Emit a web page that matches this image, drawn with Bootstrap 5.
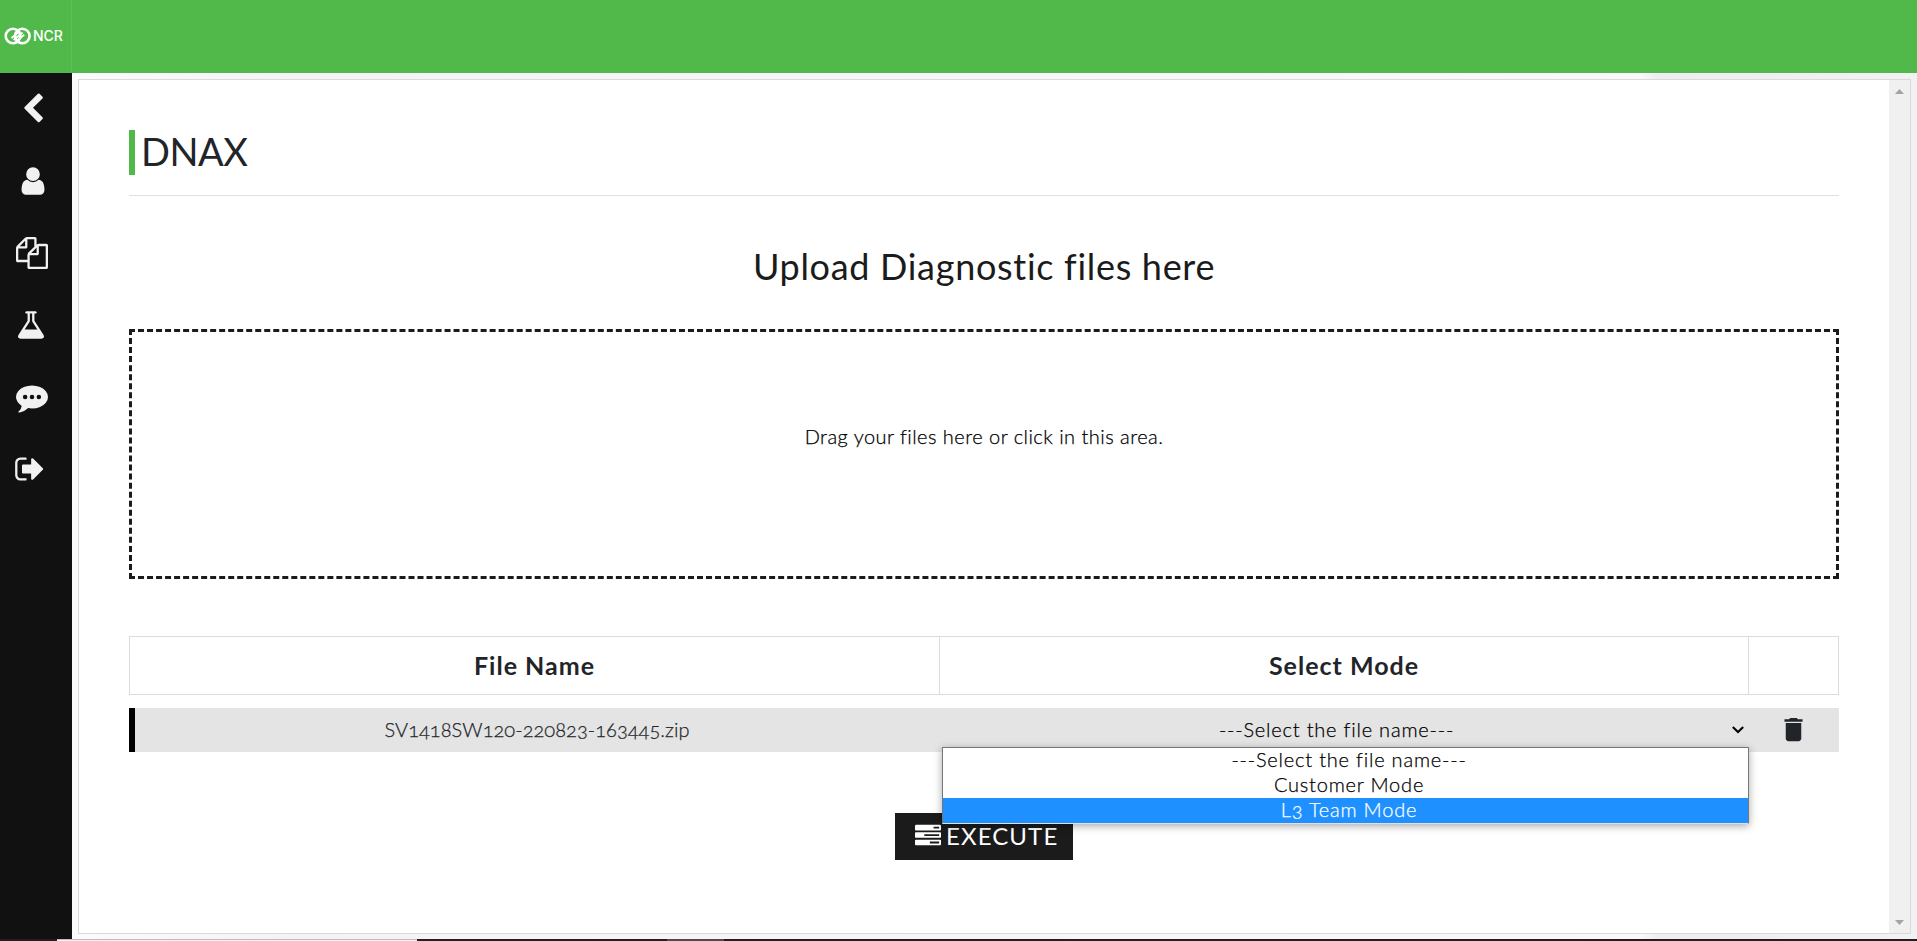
<!DOCTYPE html>
<html lang="en">
<head>
<meta charset="utf-8">
<title>DNAX</title>
<link href="https://cdn.jsdelivr.net/npm/bootstrap@5.3.0/dist/css/bootstrap.min.css" rel="stylesheet">
<style>
body{font-family:Lato,"Open Sans",sans-serif;font-size:20px;color:#212529;background:#f7f7f7;overflow:hidden;font-variant-numeric:oldstyle-nums}
.topbar{height:73px;background:#50b94a}
.brand{width:72px;border-right:1px solid #5cbf57;padding-left:4px;padding-bottom:2px;color:#fff}
.brand span{font:500 14px/1 Inter,sans-serif;margin-left:1px}
.side{width:72px;background:#111}
.side a{height:72px;color:#f1f1f1;padding-left:15.5px;padding-bottom:1px}
.side svg,.btn-run svg{fill:currentColor;display:block}
.stage{padding:6px 6px 5px;background:linear-gradient(90deg,#fbfbfb 0,#f4f4f4 12%,#f9f9f9 85%,#eee 86%,#f2f2f2 100%)}
.panel{background:#fff;border:1px solid #dadada}
.inner{padding:50px 50px 0}
.title{border-left:6px solid #50b94a;height:45px;padding-left:6px;font-size:38px;line-height:43px;font-weight:400;letter-spacing:-.5px}
.rule{height:1px;background:#e0e0e0;margin-top:20px}
.upload{font-size:36px;line-height:44px;letter-spacing:.7px;color:#1b1b1b;margin-top:48px}
.drop{height:250px;border:3px dashed #1b1b1b;margin-top:41px;color:#000;padding-top:89px;line-height:30px;letter-spacing:.47px}
.drop,.entry{font-weight:300;-webkit-text-stroke:.25px}
.cols{display:grid;grid-template-columns:809px 809px 1fr}
.heads{margin-top:57px;height:59px;border:1px solid #dcdcdc;font-size:25px;font-weight:700;letter-spacing:1px;padding-bottom:0}
.heads div+div{border-left:1px solid #dcdcdc}
.entry{margin-top:13px;height:44px;background:#e4e4e4;border-left:6px solid #000;grid-template-columns:804px 809px 1fr;letter-spacing:.05px}
.entry>div{padding-bottom:2px}
.picker{color:#000;letter-spacing:.8px}
.picker>span{margin-right:14px}
.picker .arrow{right:4px;top:18px}
.menu-list{left:3px;top:39px;width:807px;height:77px;padding-left:7px;background:linear-gradient(#fff 50px,#1e90ff 50px);border:1px solid #767676;border-bottom-color:#e0e0e0;box-shadow:0 2px 8px rgba(0,0,0,.35);z-index:5}
.menu-list div{line-height:23px;height:25px}
.menu-list .on{color:#fff}
.btn-run{width:178px;height:47px;background:#1b1b1b;color:#fff;font-size:24px;letter-spacing:1.1px;margin-top:61px;padding-left:20px;padding-bottom:1px}
.btn-run svg{margin-right:5px}
.scroll{width:21px;background:#f0f0f0;padding:9px 0 8px}
.scroll svg{fill:#a3a3a3}
.taskbar{height:2px;background:#202020}
.taskbar .win{margin-left:57px;width:360px;background:#f5f5f5;border-top:1px solid #bbb}
.taskbar .tab{margin-left:250px;width:57px;background:#4b4b4b}
</style>
</head>
<body>
<div class="vh-100 d-flex flex-column">
<header class="topbar d-flex flex-shrink-0">
 <div class="brand d-flex align-items-center">
  <svg class="flex-shrink-0" width="28" height="18" viewBox="0 0 28 18" fill="none" stroke="#fff"><circle cx="9" cy="9" r="7.300" stroke-width="2.600"/><circle cx="18.300" cy="9" r="7.300" stroke-width="2.600"/><path d="M7.500 11l8.500-7M9.600 13l9-7.500M11.700 14.800l8.500-7" stroke-width="1.900"/></svg>
  <span>NCR</span>
 </div>
</header>
<div class="d-flex flex-grow-1" style="min-height:0">
 <nav class="side d-flex flex-column flex-shrink-0">
  <a class="d-flex align-items-center" style="padding-left:17px"><svg width="32" height="32" viewBox="0 0 1792 1792"><path d="M1427 301l-531 531 531 531q19 19 19 45t-19 45l-166 166q-19 19-45 19t-45-19l-742-742q-19-19-19-45t19-45l742-742q19-19 45-19t45 19l166 166q19 19 19 45t-19 45z"/></svg></a>
  <a class="d-flex align-items-center" style="padding-left:17px"><svg width="32" height="32" viewBox="0 0 1792 1792"><path d="M1536 1399q0 109-62.500 187t-150.500 78h-854q-88 0-150.500-78t-62.500-187q0-85 8.500-160.500t31.500-152 58.500-131 94-89 134.500-34.500q131 128 313 128t313-128q76 0 134.500 34.500t94 89 58.500 131 31.500 152 8.500 160.500zm-256-887q0 159-112.500 271.500t-271.500 112.500-271.500-112.500-112.500-271.500 112.500-271.500 271.500-112.500 271.500 112.500 112.500 271.500z"/></svg></a>
  <a class="d-flex align-items-center"><svg width="32" height="32" viewBox="0 0 1792 1792"><path d="M1696 384q40 0 68 28t28 68v1216q0 40-28 68t-68 28h-960q-40 0-68-28t-28-68v-288h-544q-40 0-68-28t-28-68v-672q0-40 20-88t48-76l408-408q28-28 76-48t88-20h416q40 0 68 28t28 68v328q68-40 128-40h416zm-544 213l-299 299h299v-299zm-640-384l-299 299h299v-299zm196 647l316-316v-416h-384v416q0 40-28 68t-68 28h-416v640h512v-256q0-40 20-88t48-76zm956 804v-1152h-384v416q0 40-28 68t-68 28h-416v640h896z"/></svg></a>
  <a class="d-flex align-items-center" style="padding-left:14.5px"><svg width="32" height="32" viewBox="0 0 1792 1792"><path d="M1591 1448q56 89 21.500 152.500t-140.500 63.500h-1152q-106 0-140.500-63.500t21.500-152.500l503-793v-399h-64q-26 0-45-19t-19-45 19-45 45-19h512q26 0 45 19t19 45-19 45-45 19h-64v399zm-779-725l-272 429h712l-272-429-20-31v-436h-128v436z"/></svg></a>
  <a class="d-flex align-items-center"><svg width="32" height="32" viewBox="0 0 1792 1792"><path fill-rule="evenodd" d="M640 896a128 128 0 1 0-256 0 128 128 0 0 0 256 0zm384 0a128 128 0 1 0-256 0 128 128 0 0 0 256 0zm384 0a128 128 0 1 0-256 0 128 128 0 0 0 256 0zm384 0q0 174-120 321.500t-326 233-450 85.500q-110 0-211-18-173 173-435 229-52 10-86 13-12 1-22-6t-13-18q-4-15 20-37 5-5 23.500-21.500t25.500-23.500 23.500-25.500 24-31.500 20.500-37 20-48 14.500-57.500 12.500-72.500q-146-90-229.500-216.500t-83.500-269.500q0-174 120-321.500t326-233 450-85.500 450 85.500 326 233 120 321.500z"/></svg></a>
  <a class="d-flex align-items-center" style="padding-left:14px"><svg width="32" height="32" viewBox="0 0 1792 1792"><path d="M704 1440q0 4 1 20t.5 26.500-3 23.500-10 19.500-20.500 6.500h-320q-119 0-203.500-84.500t-84.500-203.500v-704q0-119 84.500-203.500t203.500-84.500h320q13 0 22.500 9.500t9.500 22.500q0 4 1 20t.5 26.500-3 23.500-10 19.500-20.500 6.500h-320q-66 0-113 47t-47 113v704q0 66 47 113t113 47h312l11.500 1 11.500 3 8 5.500 7 9 2 13.500zm928-544q0 26-19 45l-544 544q-19 19-45 19t-45-19-19-45v-288h-448q-26 0-45-19t-19-45v-384q0-26 19-45t45-19h448v-288q0-26 19-45t45-19 45 19l544 544q19 19 19 45z"/></svg></a>
 </nav>
 <div class="stage flex-grow-1 d-flex">
  <main class="panel flex-grow-1 d-flex">
   <div class="inner flex-grow-1">
    <h1 class="title m-0">DNAX</h1>
    <div class="rule"></div>
    <div class="upload text-center">Upload Diagnostic files here</div>
    <div class="drop text-center">Drag your files here or click in this area.</div>
    <div class="cols heads text-center">
     <div class="d-flex align-items-center justify-content-center">File Name</div>
     <div class="d-flex align-items-center justify-content-center">Select Mode</div>
     <div></div>
    </div>
    <div class="cols entry">
     <div class="d-flex align-items-center justify-content-center">SV1418SW120-220823-163445.zip</div>
     <div class="picker position-relative d-flex align-items-center justify-content-center"><span>---Select the file name---</span>
      <svg class="arrow position-absolute" width="12" height="8" viewBox="0 0 12 8" fill="none" stroke="#000" stroke-width="2"><path d="M.8 1l5.200 5 5.200-5"/></svg>
      <div class="menu-list position-absolute text-center"><div>---Select the file name---</div><div>Customer Mode</div><div class="on">L3 Team Mode</div></div>
     </div>
     <div class="d-flex align-items-center justify-content-center"><svg width="31" height="31" viewBox="0 0 24 24" fill="#212529"><path d="M6 19c0 1.100.9 2 2 2h8c1.100 0 2-.9 2-2V7H6v12zM19 4h-3.500l-1-1h-5l-1 1H5v2h14V4z"/></svg></div>
    </div>
    <div class="btn-run mx-auto d-flex align-items-center"><svg width="26" height="26" viewBox="0 0 1792 1792"><path d="M1024 1408h640v-128h-640v128zm-384-512h1024v-128h-1024v128zm640-512h384v-128h-384v128zm512 832v256q0 26-19 45t-45 19h-1664q-26 0-45-19t-19-45v-256q0-26 19-45t45-19h1664q26 0 45 19t19 45zm0-512v256q0 26-19 45t-45 19h-1664q-26 0-45-19t-19-45v-256q0-26 19-45t45-19h1664q26 0 45 19t19 45zm0-512v256q0 26-19 45t-45 19h-1664q-26 0-45-19t-19-45v-256q0-26 19-45t45-19h1664q26 0 45 19t19 45z"/></svg>EXECUTE</div>
   </div>
   <div class="scroll flex-shrink-0 d-flex flex-column justify-content-between align-items-center">
    <svg width="9" height="5"><path d="M0 5L4.500 0 9 5z"/></svg><svg width="9" height="5"><path d="M0 0h9L4.500 5z"/></svg>
   </div>
  </main>
 </div>
</div>
<footer class="taskbar d-flex flex-shrink-0"><div class="win"></div><div class="tab"></div></footer>
</div>
<script src="https://cdn.jsdelivr.net/npm/bootstrap@5.3.0/dist/js/bootstrap.bundle.min.js"></script>
</body>
</html>
